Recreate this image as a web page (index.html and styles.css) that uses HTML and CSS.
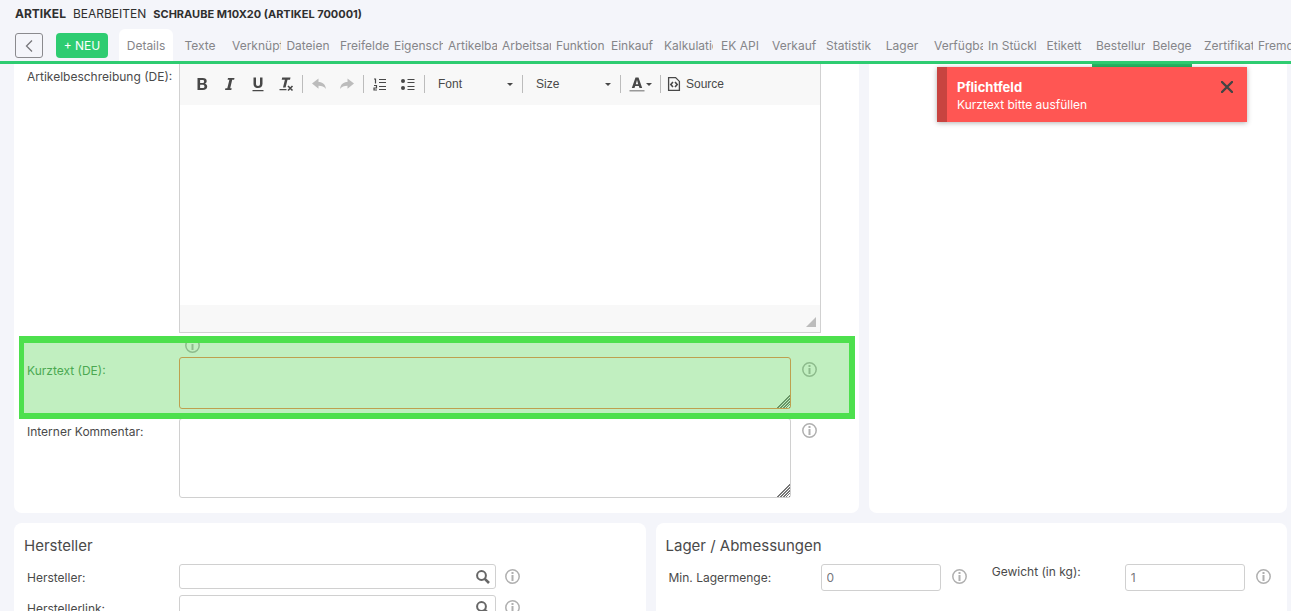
FILE: index.html
```html
<!DOCTYPE html>
<html lang="de">
<head>
    <meta charset="UTF-8">
    <meta name="viewport" content="width=device-width, initial-scale=1.0">
    <title>Artikel bearbeiten</title>
    <link rel="stylesheet" href="styles.css">
</head>
<body>
    <svg class="sprite" aria-hidden="true">
        <symbol id="info" viewBox="0 0 15 15">
            <circle cx="7.5" cy="7.5" r="6.7" fill="none" stroke="currentColor" stroke-width="1.5"/>
            <path fill="currentColor" d="M6.5 3h2v2h-2zM6.5 6h2v6h-2z"/>
        </symbol>
        <symbol id="search" viewBox="0 0 14 14">
            <circle cx="5.5" cy="5.5" r="4.4" fill="none" stroke="currentColor" stroke-width="2"/>
            <path d="M8.8 8.8L13 13" fill="none" stroke="currentColor" stroke-width="2.6"/>
        </symbol>
    </svg>

    <header class="header">
        <h1 class="page-title"><strong>ARTIKEL</strong><span>BEARBEITEN</span><strong class="article">SCHRAUBE M10X20 (ARTIKEL 700001)</strong></h1>
        <div class="nav">
            <button type="button" class="back" aria-label="Zurück">
                <svg width="8" height="12" viewBox="0 0 8 12"><path d="M7 .5L1.500 6 7 11.500" fill="none" stroke="currentColor" stroke-width="1.300"/></svg>
            </button>
            <button type="button" class="new">+ NEU</button>
            <nav class="tabs">
                <a href="#" class="active">Details</a>
                <a href="#">Texte</a>
                <a href="#">Verknüpfungen</a>
                <a href="#">Dateien</a>
                <a href="#">Freifelder</a>
                <a href="#">Eigenschaften</a>
                <a href="#">Artikelbaum</a>
                <a href="#">Arbeitsanweisung</a>
                <a href="#">Funktion</a>
                <a href="#">Einkauf</a>
                <a href="#">Kalkulation</a>
                <a href="#">EK API</a>
                <a href="#">Verkauf</a>
                <a href="#">Statistik</a>
                <a href="#">Lager</a>
                <a href="#">Verfügbarkeit</a>
                <a href="#">In Stückliste</a>
                <a href="#">Etikett</a>
                <a href="#">Bestellung</a>
                <a href="#">Belege</a>
                <a href="#">Zertifikate</a>
                <a href="#">Fremdnummern</a>
            </nav>
        </div>
    </header>

    <main class="content">
        <div class="row-top">
            <section class="panel texts">
                <div class="field editor-field">
                    <span class="label">Artikelbeschreibung (DE):</span>
                    <div class="editor">
                        <div class="toolbar">
                            <button type="button" class="tool" aria-label="Fett">
                                <svg viewBox="0 0 16 16"><path fill="currentColor" fill-rule="evenodd" d="M3.500 2h5.200c2.600 0 4 1.200 4 3.100 0 1.300-.7 2.200-1.800 2.600 1.400.3 2.300 1.300 2.300 2.800C13.200 12.700 11.600 14 8.900 14H3.500zm2.600 2v2.900h2.200c1.200 0 1.800-.5 1.800-1.500S9.500 4 8.300 4zm0 4.800V12h2.400c1.300 0 2-.5 2-1.600s-.7-1.600-2-1.600z"/></svg>
                            </button>
                            <button type="button" class="tool" aria-label="Kursiv">
                                <svg viewBox="0 0 16 16"><path fill="currentColor" d="M6 2h6.500l-.4 1.800h-1.900L8.200 12.200h1.500L9.300 14H3l.4-1.800h1.900L7.400 3.800H5.600z"/></svg>
                            </button>
                            <button type="button" class="tool" aria-label="Unterstrichen">
                                <svg viewBox="0 0 16 16"><path fill="currentColor" d="M3.500 1.500H6v6c0 1.800.7 2.500 2 2.500s2-.7 2-2.500v-6h2.500v6.200c0 2.800-1.700 4.300-4.500 4.300s-4.500-1.500-4.500-4.300zM2.500 14h11v1.200h-11z"/></svg>
                            </button>
                            <button type="button" class="tool" aria-label="Formatierung entfernen">
                                <svg viewBox="0 0 16 16"><path fill="currentColor" d="M4.200 1.500h8.300l-.5 2.300H9.500L7.600 11.500H5l1.900-7.700H3.700zM1.500 13h7v1.300h-7z"/><path d="M10 10l4.500 4.500M14.500 10L10 14.500" stroke="currentColor" stroke-width="1.600"/></svg>
                            </button>
                            <span class="sep"></span>
                            <button type="button" class="tool off" aria-label="Rückgängig">
                                <svg viewBox="0 0 16 16"><path fill="currentColor" d="M1 7.500L7.500 2.500V6c4 0 6.800 2 7.500 7-1.800-2.500-4-3.200-7.500-3.200v3z"/></svg>
                            </button>
                            <button type="button" class="tool off" aria-label="Wiederherstellen">
                                <svg viewBox="0 0 16 16"><path fill="currentColor" d="M15 7.500L8.500 2.500V6C4.500 6 1.700 8 1 13c1.800-2.500 4-3.200 7.500-3.200v3z"/></svg>
                            </button>
                            <span class="sep"></span>
                            <button type="button" class="tool" aria-label="Nummerierte Liste">
                                <svg viewBox="0 0 16 16"><path d="M2 3h1.500v4.500M2 9.500h2.500V12H2v2h3M7 3.500h7M7 6.500h7M7 10.500h7M7 13.500h7" fill="none" stroke="currentColor" stroke-width="1.200"/></svg>
                            </button>
                            <button type="button" class="tool" aria-label="Liste">
                                <svg viewBox="0 0 16 16"><circle cx="3" cy="5" r="2" fill="currentColor"/><circle cx="3" cy="12" r="2" fill="currentColor"/><path d="M7.500 3.500h7M7.500 6.500h7M7.500 10.500h7M7.500 13.500h7" stroke="currentColor" stroke-width="1.200"/></svg>
                            </button>
                            <span class="sep"></span>
                            <span class="combo"><select aria-label="Schriftart"><option>Font</option></select></span>
                            <span class="sep"></span>
                            <span class="combo"><select aria-label="Schriftgröße"><option>Size</option></select></span>
                            <span class="sep"></span>
                            <button type="button" class="tool color" aria-label="Textfarbe">
                                <svg viewBox="0 0 16 16"><path fill="currentColor" fill-rule="evenodd" d="M6.500 1.500h3L13.200 12h-2.700l-.7-2H6.200l-.7 2H2.800zM8 4L6.800 8.200h2.400z"/><path fill="#999" d="M.5 14h15v1.500H.5z"/></svg>
                            </button>
                            <span class="sep"></span>
                            <button type="button" class="source">
                                <svg viewBox="0 0 16 16"><path d="M2.600 1.600h7l3.800 3.800v9h-10.800z" fill="none" stroke="currentColor" stroke-width="1.300"/><path d="M7 6L4.800 8.500 7 11M9 6l2.200 2.500L9 11" fill="none" stroke="currentColor" stroke-width="1.600"/></svg>
                                Source
                            </button>
                        </div>
                        <div class="edit-area" contenteditable="true" role="textbox" aria-label="Artikelbeschreibung (DE)"></div>
                        <div class="editor-foot"></div>
                    </div>
                </div>
                <div class="editor-info"><svg class="info"><use href="#info"/></svg></div>
                <div class="field">
                    <label class="label required" for="kurztext">Kurztext (DE):</label>
                    <textarea id="kurztext" class="short error"></textarea>
                    <svg class="info"><use href="#info"/></svg>
                </div>
                <div class="field">
                    <label class="label" for="kommentar">Interner Kommentar:</label>
                    <textarea id="kommentar" class="long"></textarea>
                    <svg class="info"><use href="#info"/></svg>
                </div>
                <div class="highlight"></div>
            </section>
            <section class="panel"></section>
        </div>

        <div class="row-bottom">
            <section class="panel">
                <h2>Hersteller</h2>
                <div class="field maker">
                    <label class="label" for="hersteller">Hersteller:</label>
                    <div class="lookup">
                        <input type="text" id="hersteller">
                        <svg><use href="#search"/></svg>
                    </div>
                    <svg class="info"><use href="#info"/></svg>
                </div>
                <div class="field maker">
                    <label class="label" for="herstellerlink">Herstellerlink:</label>
                    <div class="lookup">
                        <input type="text" id="herstellerlink">
                        <svg><use href="#search"/></svg>
                    </div>
                    <svg class="info"><use href="#info"/></svg>
                </div>
            </section>
            <section class="panel">
                <h2>Lager / Abmessungen</h2>
                <div class="stock">
                    <label class="label" for="menge">Min. Lagermenge:</label>
                    <input type="text" id="menge" value="0">
                    <svg class="info"><use href="#info"/></svg>
                    <label class="label weight" for="gewicht">Gewicht (in kg):</label>
                    <input type="text" id="gewicht" value="1">
                    <svg class="info"><use href="#info"/></svg>
                </div>
            </section>
        </div>
    </main>

    <div class="toast-bar"></div>
    <div class="toast" role="alert">
        <strong>Pflichtfeld</strong>
        <p>Kurztext bitte ausfüllen</p>
        <button type="button" aria-label="Schließen">
            <svg width="12" height="12" viewBox="0 0 12 12"><path d="M1 1l10 10M11 1L1 11" stroke="currentColor" stroke-width="2.400" stroke-linecap="round"/></svg>
        </button>
    </div>
</body>
</html>
```
FILE: styles.css
```css
* {
    margin: 0;
    padding: 0;
    box-sizing: border-box;
}

body {
    height: 100vh;
    display: flex;
    flex-direction: column;
    overflow: hidden;
    position: relative;
    background: #f4f5fa;
    color: #4a4a4a;
    font-family: Inter, "Liberation Sans", sans-serif;
    font-size: 12px;
    line-height: 16px;
}

button, input, select, textarea {
    font: inherit;
    color: inherit;
}

button {
    border: none;
    background: none;
    cursor: pointer;
}

.sprite {
    position: absolute;
    width: 0;
    height: 0;
}

/* Header */
.header {
    flex: none;
    border-bottom: 3px solid #2ecc71;
}

.page-title {
    display: flex;
    gap: 7px;
    padding: 6px 15px 0;
    height: 29px;
    font-size: 12px;
    font-weight: 400;
    color: #2f2f2f;
}

.page-title strong {
    font-weight: 700;
}

.page-title .article {
    font-size: 11px;
}

.nav {
    display: flex;
    height: 32px;
    padding-left: 15px;
}

.back {
    display: flex;
    align-items: center;
    justify-content: center;
    flex: none;
    width: 28px;
    height: 25px;
    margin: 4px 13px 0 0;
    border: 1px solid #8a8a8e;
    border-radius: 3px;
    color: #77777b;
}

.new {
    flex: none;
    width: 52px;
    height: 25px;
    margin: 4px 11px 0 0;
    border-radius: 4px;
    background: #2ecc71;
    color: #fff;
}

.tabs {
    display: flex;
    overflow: hidden;
}

.tabs a {
    flex: none;
    width: 54px;
    padding: 9px 5px 0;
    overflow: hidden;
    text-align: center;
    white-space: nowrap;
    text-decoration: none;
    color: #858589;
}

.tabs .active {
    background: #fff;
    border-radius: 6px 6px 0 0;
}

/* Panels */
.content {
    flex: 1;
    min-height: 0;
    overflow: hidden;
    padding: 0 4px 0 14px;
}

.row-top, .row-bottom {
    display: grid;
    gap: 10px;
}

.row-top {
    grid-template-columns: 845fr 418fr;
    margin-bottom: 10px;
}

.row-bottom {
    grid-template-columns: minmax(0, 1fr) minmax(0, 1fr);
}

.panel {
    background: #fff;
    border-radius: 8px;
    padding-bottom: 15px;
}

.row-top .panel {
    border-radius: 0 0 8px 8px;
}

.texts {
    position: relative;
}

.panel h2 {
    padding: 13px 10px 8px;
    font-size: 15px;
    line-height: 20px;
    font-weight: 400;
}

.field {
    display: flex;
    padding: 0 42px 0 13px;
}

.label {
    flex: none;
    width: 152px;
    padding-top: 6px;
}

.info {
    flex: none;
    width: 15px;
    height: 15px;
    margin: 5px 0 0 11px;
    color: #b0b0b0;
}

textarea, input {
    display: block;
    flex: 1;
    min-width: 0;
    border: 1px solid #d0d0d0;
    border-radius: 3px;
    background: #fff;
}

/* striped corner grip */
textarea::-webkit-resizer {
    background:
        linear-gradient(135deg, #fff 55%, transparent 55%),
        repeating-linear-gradient(135deg, #777 0 1px, #fff 1px 2px);
}

.short {
    height: 52px;
    margin-bottom: 9px;
}

.long {
    height: 80px;
}

.error {
    border-color: #fa8652;
}

.required {
    color: #4a9355;
}

/* Editor */
.editor-field {
    padding-right: 38px;
}

.editor-field .label {
    padding-top: 5px;
}

.editor {
    flex: 1;
    border: 1px solid #d1d1d1;
    border-top: none;
}

.toolbar {
    display: flex;
    align-items: center;
    height: 41px;
    padding: 0 0 1px 8px;
    background: #f8f8f8;
    font-family: "Liberation Sans", Arial, sans-serif;
    color: #484848;
}

.tool {
    display: flex;
    align-items: center;
    justify-content: center;
    width: 28px;
    height: 24px;
}

.tool svg, .source svg {
    width: 16px;
    height: 16px;
}

.off {
    color: #bcbcbc;
}

.sep {
    width: 1px;
    height: 18px;
    margin: 0 2px;
    background: #bcbcbc;
}

.combo {
    position: relative;
    width: 93px;
}

.combo select {
    width: 100%;
    padding-left: 11px;
    border: none;
    appearance: none;
    background: none;
}

.combo::after, .color::after {
    content: '';
    border: 3px solid transparent;
    border-top-color: #484848;
    border-bottom: none;
}

.combo::after {
    position: absolute;
    right: 7px;
    top: 7px;
    pointer-events: none;
}

.color {
    width: 35px;
    gap: 1px;
}

.source {
    display: flex;
    align-items: center;
    gap: 4px;
    padding-left: 3px;
}

.edit-area {
    height: 200px;
    outline: none;
}

.editor-foot {
    display: flex;
    justify-content: flex-end;
    align-items: flex-end;
    height: 27px;
    padding: 0 4px 5px 0;
    background: #f8f8f8;
}

.editor-foot::after {
    content: '';
    border: 5px solid transparent;
    border-right-color: #bcbcbc;
    border-bottom-color: #bcbcbc;
}

.editor-info {
    height: 24px;
    padding-left: 160px;
}

.highlight {
    position: absolute;
    left: 5px;
    right: 4px;
    top: 272px;
    height: 83px;
    border: 6px solid #4de04d;
    border-width: 7px 6px 6px 5px;
    background: rgba(77, 210, 75, 0.35);
    background-clip: padding-box;
    pointer-events: none;
}

/* Hersteller */
.maker {
    padding-right: 126px;
    margin-bottom: 6px;
}

.maker .info {
    margin-left: 9px;
}

.lookup {
    position: relative;
    flex: 1;
}

.lookup input {
    width: 100%;
    height: 25px;
    padding: 0 24px 0 5px;
}

.lookup svg {
    position: absolute;
    right: 6px;
    top: 6px;
    width: 14px;
    height: 14px;
    color: #666;
}

/* Lager */
.stock {
    display: flex;
    padding: 0 16px 0 13px;
}

.stock input {
    height: 27px;
    padding: 0 5px;
    color: #77777b;
}

.stock .weight {
    width: 158px;
    padding: 0 0 0 25px;
}

/* Toast */
.toast-bar {
    position: absolute;
    top: 64px;
    right: 99px;
    width: 100px;
    height: 3px;
    background: #27b765;
}

.toast {
    position: absolute;
    top: 67px;
    right: 44px;
    width: 310px;
    padding: 12px 10px 9px;
    border-left: 10px solid #c84440;
    background: #ff5653;
    color: #fff;
    line-height: 17px;
    box-shadow: 0 1px 5px rgba(0, 0, 0, 0.3);
}

.toast strong {
    display: block;
    font-size: 13px;
}

.toast button {
    position: absolute;
    top: 13px;
    right: 14px;
    color: #444;
}
```
